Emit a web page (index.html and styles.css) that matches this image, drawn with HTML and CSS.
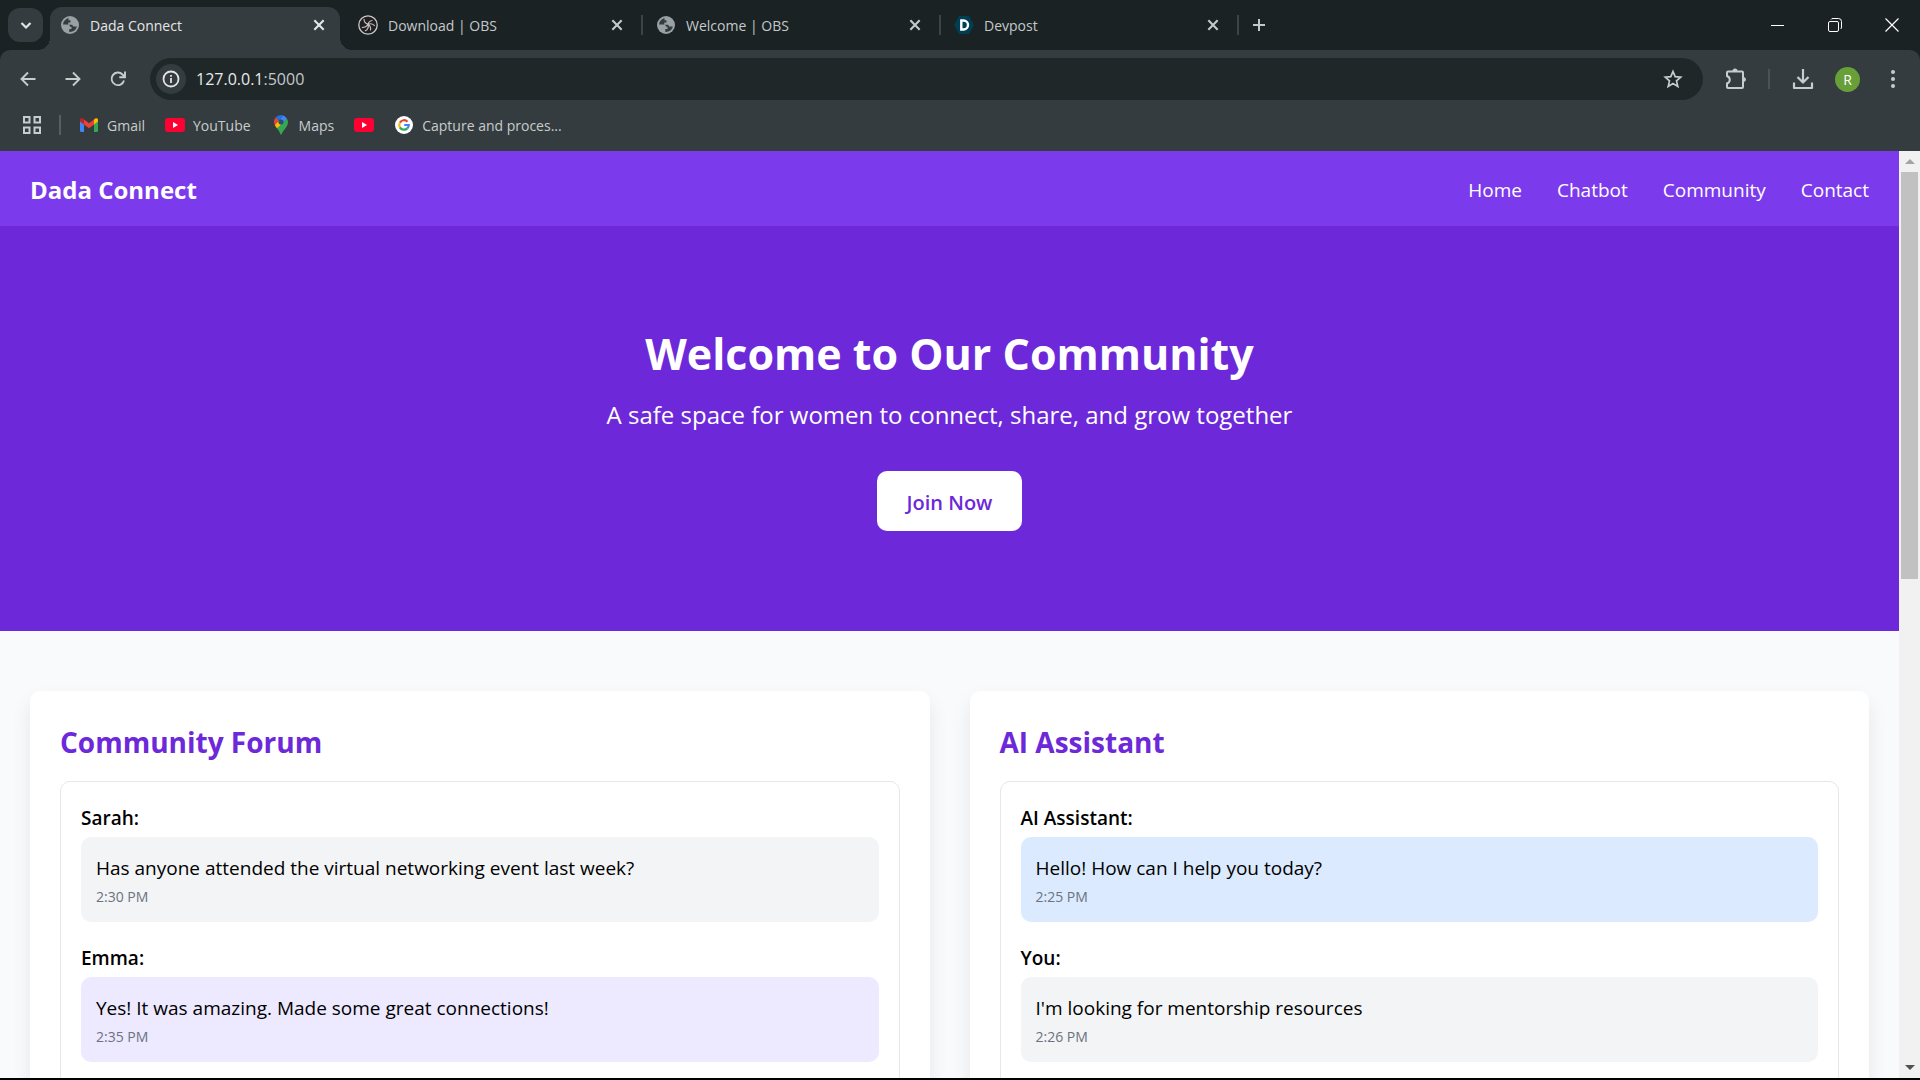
FILE: index.html
```html
<!DOCTYPE html>
<html lang="en">
<head>
    <meta charset="UTF-8">
    <meta name="viewport" content="width=device-width, initial-scale=1.0">
    <title>Dada Connect</title>
    <link rel="stylesheet" href="styles.css">
</head>
<body>

  <!-- shared icons -->
  <svg class="icon-defs" aria-hidden="true">
    <symbol id="icon-globe" viewBox="0 0 20 20">
      <circle cx="10" cy="10" r="9" fill="#9aa0a3"/>
      <path d="M8.5 3C5.5 3.8 3.200 6.400 3 9.500h4.500c1.800 0 2.500 1 2.500 2.300h1.500V14H9.300v2.900c3.500.4 6.700-1.900 7.500-5.400H14c-1 0-1.500-.8-1.500-1.800H8.300V7.500h2.200V5.300H8.500z" fill="#353c3f"/>
      <path d="M10.500 5.300V3.200M12.500 9.700l3-2.200" stroke="#9aa0a3" stroke-width="1"/>
    </symbol>
    <symbol id="icon-close" viewBox="0 0 12 12">
      <path d="M2 2l8 8M10 2l-8 8" stroke="currentColor" stroke-width="1.8" fill="none"/>
    </symbol>
    <symbol id="icon-youtube" viewBox="0 0 20 14">
      <rect width="20" height="14" rx="3" fill="#ff0033"/>
      <path d="M8 4l5 3-5 3z" fill="#fff"/>
    </symbol>
  </svg>

  <!-- browser tabs -->
  <div class="tab-strip">
    <button class="tab-search" aria-label="Search tabs">
      <svg width="14" height="14" viewBox="0 0 14 14"><path d="M2.500 5L7 9.500 11.500 5" stroke="currentColor" stroke-width="2.200" fill="none"/></svg>
    </button>
    <div class="tab active">
      <svg class="favicon"><use href="#icon-globe"/></svg>
      <span class="tab-title">Dada Connect</span>
      <button class="tab-close" aria-label="Close tab"><svg width="14" height="14"><use href="#icon-close"/></svg></button>
    </div>
    <span class="tab-line hidden"></span>
    <div class="tab">
      <svg class="favicon" viewBox="0 0 20 20">
        <circle cx="10" cy="10" r="9.200" fill="#231f20" stroke="#c8c8c8" stroke-width="1.300"/>
        <path d="M6 4c0 2.800 1.500 4.600 4 5.300 2.500-1 5.300-.5 6.800 1.700M10 9.300c.8 2.800-.3 5.300-3 6.700M3.800 12.500c2.500 0 5-.8 6.200-3.200M10 9.300c2 1.200 3 3.200 2.500 6M14.500 5.500C12.200 5.700 10.600 7 10 9.300" stroke="#c8c8c8" stroke-width="1.100" fill="none"/>
      </svg>
      <span class="tab-title">Download | OBS</span>
      <button class="tab-close" aria-label="Close tab"><svg width="14" height="14"><use href="#icon-close"/></svg></button>
    </div>
    <span class="tab-line"></span>
    <div class="tab">
      <svg class="favicon"><use href="#icon-globe"/></svg>
      <span class="tab-title">Welcome | OBS</span>
      <button class="tab-close" aria-label="Close tab"><svg width="14" height="14"><use href="#icon-close"/></svg></button>
    </div>
    <span class="tab-line"></span>
    <div class="tab">
      <svg class="favicon" viewBox="0 0 20 20">
        <path d="M5 1h10l5 9-5 9H5L0 10z" fill="#003e54"/>
        <path d="M7.300 5.500h2.200a4.500 4.500 0 0 1 0 9H7.300z" fill="none" stroke="#fff" stroke-width="2.400"/>
      </svg>
      <span class="tab-title">Devpost</span>
      <button class="tab-close" aria-label="Close tab"><svg width="14" height="14"><use href="#icon-close"/></svg></button>
    </div>
    <span class="tab-line"></span>
    <button class="new-tab" aria-label="New tab">
      <svg width="14" height="14" viewBox="0 0 14 14"><path d="M7 1v12M1 7h12" stroke="currentColor" stroke-width="2"/></svg>
    </button>
    <div class="window-buttons">
      <button aria-label="Minimize"><svg width="14" height="14" viewBox="0 0 14 14"><path d="M0 7.500h13" stroke="#fff"/></svg></button>
      <button aria-label="Restore"><svg width="14" height="14" viewBox="0 0 14 14"><rect x=".5" y="3.500" width="10" height="10" rx="1.500" fill="none" stroke="#fff"/><path d="M3 1.500Q3.500.5 5 .5h5.500q3 0 3 3V9q0 1.500-1 2" fill="none" stroke="#fff"/></svg></button>
      <button aria-label="Close"><svg width="14" height="14" viewBox="0 0 14 14"><path d="M.5.5l13 13M13.500.5l-13 13" stroke="#fff" stroke-width="1.200"/></svg></button>
    </div>
  </div>

  <!-- address bar -->
  <div class="toolbar">
    <div class="address-row">
      <button class="tool" aria-label="Back"><svg width="16" height="16" viewBox="0 0 16 16"><path d="M15.500 8H1.500M8 1.500L1.500 8 8 14.500" fill="none" stroke="currentColor" stroke-width="1.900"/></svg></button>
      <button class="tool" aria-label="Forward"><svg width="16" height="16" viewBox="0 0 16 16"><path d="M.5 8h14M8 1.500L14.500 8 8 14.500" fill="none" stroke="currentColor" stroke-width="1.900"/></svg></button>
      <button class="tool" aria-label="Reload"><svg width="16" height="16" viewBox="0 0 16 16"><path d="M14 9.500A6.300 6.300 0 1 1 12.500 3.500L14.500 5.500M15 .5v5.700H9.300" fill="none" stroke="currentColor" stroke-width="1.900"/></svg></button>
      <div class="omnibox">
        <button class="site-info" aria-label="Site information">
          <svg width="18" height="18" viewBox="0 0 18 18"><circle cx="9" cy="9" r="7.500" fill="none" stroke="currentColor" stroke-width="1.800"/><path d="M9 8v5M9 5v1.800" stroke="currentColor" stroke-width="1.800"/></svg>
        </button>
        <div class="url" role="textbox" aria-label="Address">127.0.0.1<span>:5000</span></div>
        <button class="star" aria-label="Bookmark this page">
          <svg width="20" height="20" viewBox="0 0 20 20"><path d="M10 2.500l2.200 5.200 5.500.5-4.200 3.700 1.300 5.500L10 14.500l-4.800 2.900 1.300-5.500-4.200-3.700 5.500-.5z" fill="none" stroke="currentColor" stroke-width="1.700"/></svg>
        </button>
      </div>
      <button class="tool" aria-label="Extensions">
        <svg width="22" height="22" viewBox="0 0 22 22">
          <path d="M3 3.500h14q1 0 1 1V19q0 1-1 1H3q-1 0-1-1v-3.500q2.800-1 2.800-3.700T2 8V4.500q0-1 1-1z" fill="none" stroke="currentColor" stroke-width="2"/>
          <path d="M7.500 3a2.500 2.500 0 0 1 5 0zM18.500 9a2.500 2.500 0 0 1 0 5z" fill="currentColor"/>
        </svg>
      </button>
      <span class="tool-line"></span>
      <button class="tool" aria-label="Downloads"><svg width="22" height="22" viewBox="0 0 22 22"><path d="M11 1v13M5.500 9l5.500 5.500L16.500 9M2 14.500V20h18v-5.500" fill="none" stroke="currentColor" stroke-width="2.200" stroke-linejoin="round"/></svg></button>
      <button class="tool" aria-label="Profile"><span class="avatar">R</span></button>
      <button class="tool" aria-label="Menu"><svg width="6" height="20" viewBox="0 0 6 20" fill="currentColor"><circle cx="3" cy="3" r="2"/><circle cx="3" cy="10" r="2"/><circle cx="3" cy="17" r="2"/></svg></button>
    </div>

    <div class="bookmarks">
      <button class="apps" aria-label="Apps">
        <svg width="18" height="18" viewBox="0 0 18 18" fill="none" stroke="currentColor" stroke-width="2"><rect x="1" y="1" width="5.500" height="5.500"/><rect x="11.500" y="1" width="5.500" height="5.500"/><rect x="1" y="11.500" width="5.500" height="5.500"/><rect x="11.500" y="11.500" width="5.500" height="5.500"/></svg>
      </button>
      <span class="bookmark-line"></span>
      <a href="#">
        <svg width="20" height="14" viewBox="0 0 20 14">
          <path d="M1 2v10.500Q1 14 2.500 14H5V5z" fill="#4285f4"/>
          <path d="M19 2v10.500q0 1.500-1.500 1.500H15V5z" fill="#34a853"/>
          <path d="M15 1.500v5l4-3V2c0-2-2.300-2.500-4-.5z" fill="#fbbc04"/>
          <path d="M1 2v1.500l4 3v-5C3.300-.5 1 0 1 2z" fill="#c5221f"/>
          <path d="M5 1.500v5l5 3.700 5-3.700v-5L10 5.200z" fill="#ea4335"/>
        </svg>
        Gmail
      </a>
      <a href="#"><svg width="20" height="14"><use href="#icon-youtube"/></svg>YouTube</a>
      <a href="#">
        <svg width="20" height="20" viewBox="-3 0 20 20">
          <path d="M7 0a7 7 0 0 0-5.400 2.500L5 5.500 9.200.4A7 7 0 0 0 7 0z" fill="#1a73e8"/>
          <path d="M1.600 2.500A7 7 0 0 0 .8 10L5 5.500z" fill="#ea4335"/>
          <path d="M9.200.4L5 5.500a2.600 2.600 0 0 1 4 3.200l4-4.900A7 7 0 0 0 9.200.4z" fill="#4285f4"/>
          <path d="M.8 10c.5 1.200 1.400 2.300 2.300 3.500L9 8.700A2.600 2.600 0 0 1 5 5.500z" fill="#fbbc04"/>
          <path d="M13 3.800l-9.900 9.700C5 15.500 5.800 17.500 6.300 19q.7 1.600 1.400 0C9 15 14 12 14 7a7 7 0 0 0-1-3.200z" fill="#34a853"/>
          <circle cx="7" cy="7" r="2.500" fill="#28516b"/>
        </svg>
        Maps
      </a>
      <a href="#" aria-label="YouTube"><svg width="20" height="14"><use href="#icon-youtube"/></svg></a>
      <a href="#">
        <svg width="20" height="20" viewBox="-1 -1 20 20" fill="none" stroke-width="2.200">
          <circle cx="9" cy="9" r="9" fill="#fff"/>
          <path d="M12.500 5.700A4.800 4.800 0 0 0 4.900 6.600" stroke="#ea4335"/>
          <path d="M4.900 6.600a4.800 4.800 0 0 0 0 4.800" stroke="#fbbc04"/>
          <path d="M4.900 11.400a4.800 4.800 0 0 0 7.400 1" stroke="#34a853"/>
          <path d="M12.300 12.400A4.800 4.800 0 0 0 13.800 9H9.200" stroke="#4285f4"/>
        </svg>
        Capture and proces...
      </a>
    </div>
  </div>

  <!-- page inside the browser -->
  <div class="viewport">
    <div class="page">
      <header class="header">
        <div class="logo">Dada Connect</div>
        <nav class="nav-links">
          <a href="#">Home</a>
          <a href="#chatbot">Chatbot</a>
          <a href="#community">Community</a>
          <a href="#">Contact</a>
        </nav>
      </header>

      <section class="hero">
        <h1>Welcome to Our Community</h1>
        <p>A safe space for women to connect, share, and grow together</p>
        <button class="join-button">Join Now</button>
      </section>

      <main class="container">
        <section class="card" id="community">
          <h2>Community Forum</h2>
          <div class="chat-box">
            <div class="message">
              <strong>Sarah:</strong>
              <div class="bubble">
                <p>Has anyone attended the virtual networking event last week?</p>
                <small>2:30 PM</small>
              </div>
            </div>
            <div class="message">
              <strong>Emma:</strong>
              <div class="bubble purple">
                <p>Yes! It was amazing. Made some great connections!</p>
                <small>2:35 PM</small>
              </div>
            </div>
          </div>
        </section>

        <section class="card" id="chatbot">
          <h2>AI Assistant</h2>
          <div class="chat-box">
            <div class="message">
              <strong>AI Assistant:</strong>
              <div class="bubble blue">
                <p>Hello! How can I help you today?</p>
                <small>2:25 PM</small>
              </div>
            </div>
            <div class="message">
              <strong>You:</strong>
              <div class="bubble">
                <p>I'm looking for mentorship resources</p>
                <small>2:26 PM</small>
              </div>
            </div>
          </div>
        </section>
      </main>
    </div>

    <div class="scrollbar">
      <svg class="arrow up" viewBox="0 0 10 5"><path d="M0 5l5-5 5 5z"/></svg>
      <div class="track"><div class="thumb"></div></div>
      <svg class="arrow down" viewBox="0 0 10 5"><path d="M0 0l5 5 5-5z"/></svg>
    </div>
  </div>

</body>
</html>
```
FILE: styles.css
```css
* {
  box-sizing: border-box;
  margin: 0;
  padding: 0;
}

body {
  display: flex;
  flex-direction: column;
  height: 100vh;
  overflow: hidden;
  font-family: 'Open Sans', 'Noto Sans', sans-serif;
  font-size: 19px;
  color: #000;
  background-color: #1b2224;
  border-bottom: 2px solid #000;
}

button {
  font-family: inherit;
  border: none;
  background: none;
  color: inherit;
  cursor: pointer;
}

a {
  color: inherit;
  text-decoration: none;
}

svg {
  display: block;
  flex: none;
}

.icon-defs {
  position: absolute;
  width: 0;
  height: 0;
}

/* Tab strip */
.tab-strip {
  display: flex;
  align-items: center;
  height: 50px;
  padding-left: 8px;
  font-size: 14px;
  color: #c3c9cb;
}

.tab-search {
  display: flex;
  align-items: center;
  justify-content: center;
  width: 35px;
  height: 34px;
  margin-right: 7px;
  border-radius: 12px;
  background-color: #353c3f;
  color: #e3e3e3;
}

.tab {
  position: relative;
  display: flex;
  align-items: center;
  align-self: flex-end;
  width: 290px;
  height: 43px;
  padding: 0 13px 7px 10px;
  border-radius: 12px 12px 0 0;
}

.tab.active {
  background-color: #353c3f;
  color: #e3e6e7;
}

/* curved feet of the active tab */
.tab.active::before,
.tab.active::after {
  content: '';
  position: absolute;
  bottom: 0;
  width: 12px;
  height: 12px;
}

.tab.active::before {
  left: -12px;
  background: radial-gradient(circle at 0 0, transparent 12px, #353c3f 12px);
}

.tab.active::after {
  right: -12px;
  background: radial-gradient(circle at 100% 0, transparent 12px, #353c3f 12px);
}

.favicon {
  width: 20px;
  height: 20px;
}

.tab-title {
  flex: 1;
  margin-left: 10px;
}

.tab-close {
  padding: 1px;
}

.tab-line {
  width: 2px;
  height: 20px;
  margin: 0 3px;
  background-color: #3d4447;
}

.tab-line.hidden {
  visibility: hidden;
}

.new-tab {
  padding: 10px;
}

.window-buttons {
  display: flex;
  margin-left: auto;
}

.window-buttons button {
  display: flex;
  align-items: center;
  justify-content: center;
  width: 57px;
  height: 48px;
}

/* Toolbar */
.toolbar {
  background-color: #353c3f;
  border-radius: 10px 10px 0 0;
  color: #c7cccd;
  padding-bottom: 9px;
}

.address-row {
  display: flex;
  align-items: center;
  padding: 8px 5px 0;
}

.tool {
  display: flex;
  align-items: center;
  justify-content: center;
  width: 45px;
  height: 42px;
}

.omnibox {
  display: flex;
  align-items: center;
  flex: 1;
  height: 42px;
  margin: 0 10px;
  padding: 0 20px 0 6px;
  border-radius: 21px;
  background-color: #1f2729;
}

.site-info {
  display: flex;
  align-items: center;
  justify-content: center;
  width: 30px;
  height: 30px;
  border-radius: 15px;
  background-color: #353c3f;
  color: #e3e3e3;
}

.url {
  flex: 1;
  margin-left: 10px;
  font-size: 16px;
  color: #e8eaeb;
}

.url span {
  color: #c3c9cb;
}

.tool-line {
  width: 2px;
  height: 20px;
  margin: 0 10px;
  background-color: #4b5356;
}

.avatar {
  width: 25px;
  height: 25px;
  border-radius: 50%;
  background-color: #689f38;
  color: #fff;
  font-size: 14px;
  line-height: 25px;
}

.bookmarks {
  display: flex;
  align-items: center;
  gap: 20px;
  height: 34px;
  margin-top: 8px;
  padding-left: 23px;
  font-size: 14px;
}

.bookmarks a {
  display: flex;
  align-items: center;
  gap: 8px;
}

.bookmark-line {
  width: 2px;
  height: 20px;
  margin: 0 -2px;
  background-color: #565e61;
}

/* Page */
.viewport {
  display: flex;
  flex: 1;
  min-height: 0;
}

.page {
  flex: 1;
  overflow: hidden;
  background-color: #f9fafc;
}

.header {
  display: flex;
  align-items: center;
  justify-content: space-between;
  height: 75px;
  padding: 2px 30px 0;
  background-color: #7c3aed;
  color: #fff;
}

.logo {
  font-size: 24px;
  font-weight: 700;
}

.nav-links {
  display: flex;
  gap: 35px;
}

.hero {
  padding: 100px 30px;
  background-color: #6d28d9;
  color: #fff;
  text-align: center;
}

.hero h1 {
  font-size: 43px;
  line-height: 55px;
  margin-bottom: 20px;
}

.hero p {
  font-size: 24px;
  line-height: 28px;
  margin-bottom: 42px;
}

.join-button {
  height: 60px;
  padding: 2px 30px 0;
  border-radius: 10px;
  background-color: #fff;
  color: #6d28d9;
  font-size: 20px;
  font-weight: 600;
  vertical-align: top;
}

.container {
  display: grid;
  grid-template-columns: 1fr 1fr;
  gap: 40px;
  padding: 60px 30px;
}

.card {
  padding: 30px;
  border-radius: 10px;
  background-color: #fff;
  box-shadow: 0 10px 20px rgba(0, 0, 0, 0.08);
}

.card h2 {
  color: #6d28d9;
  font-size: 28px;
  line-height: 42px;
  margin-bottom: 18px;
}

.chat-box {
  height: 500px;
  padding: 20px;
  border: 1px solid #e5e7eb;
  border-radius: 10px;
}

.message {
  margin-bottom: 20px;
}

.message strong {
  display: block;
  font-weight: 600;
  line-height: 32px;
  margin-bottom: 3px;
}

.bubble {
  padding: 15px;
  border-radius: 10px;
  background-color: #f3f4f6;
}

.bubble.purple {
  background-color: #ede9fe;
}

.bubble.blue {
  background-color: #dbeafe;
}

.bubble p {
  line-height: 32px;
}

.bubble small {
  display: block;
  margin-top: 3px;
  font-size: 14px;
  line-height: 20px;
  color: #6b7280;
}

/* Scrollbar */
.scrollbar {
  display: flex;
  flex-direction: column;
  align-items: center;
  width: 21px;
  background-color: #f1f1f1;
}

.arrow {
  width: 10px;
  height: 5px;
  margin: 8px 0;
}

.arrow.up {
  fill: #a3a3a3;
}

.arrow.down {
  fill: #505050;
}

.track {
  flex: 1;
}

.thumb {
  width: 17px;
  height: 46%;
  background-color: #c1c1c1;
}
```
